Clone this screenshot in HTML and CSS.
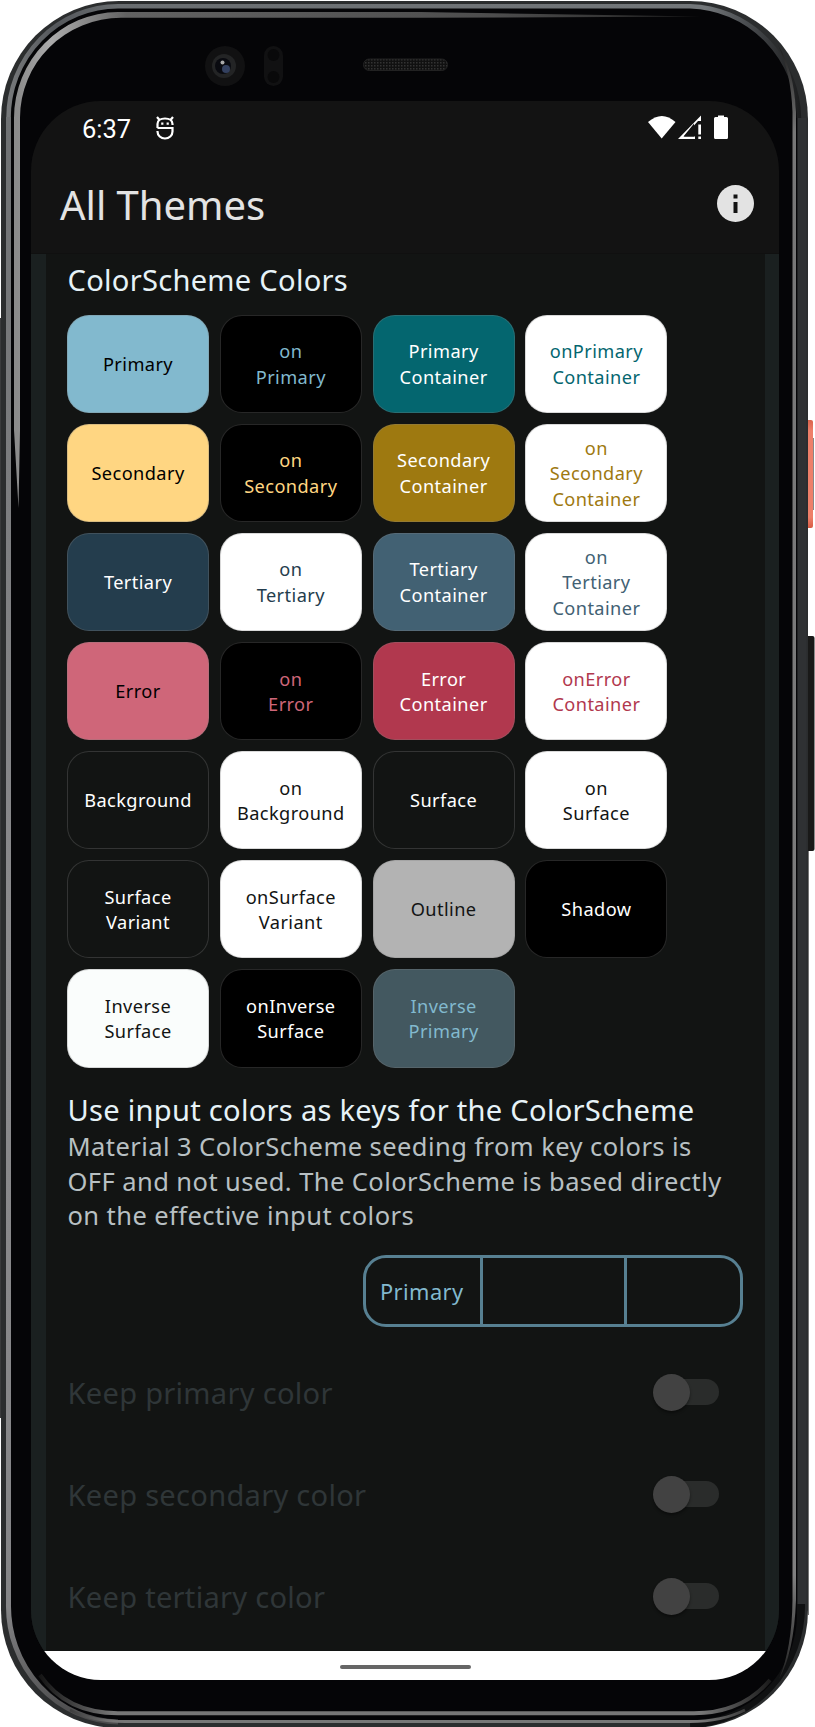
FILE: index.html
```
<!DOCTYPE html>
<html lang="en">
<head>
<meta charset="utf-8">
<title>All Themes</title>
<link rel="stylesheet" href="styles.css">
</head>
<body>
<div class="phone">
  <svg class="frame" viewBox="0 0 815 1727" aria-hidden="true">
    <defs>
      <linearGradient id="rimTop" gradientUnits="userSpaceOnUse" x1="8" y1="0" x2="800" y2="0">
        <stop offset="0" stop-color="#77797b"/><stop offset=".06" stop-color="#55585c"/><stop offset=".14" stop-color="#696d70"/><stop offset=".88" stop-color="#73777a"/><stop offset=".93" stop-color="#4c4f52"/><stop offset="1" stop-color="#1c1d1e"/>
      </linearGradient>
      <linearGradient id="rimLeft" gradientUnits="userSpaceOnUse" x1="0" y1="118" x2="0" y2="1720">
        <stop offset="0" stop-color="#6f7173"/><stop offset=".5" stop-color="#8b8b8d"/><stop offset=".93" stop-color="#858587"/><stop offset="1" stop-color="#4a4a4b"/>
      </linearGradient>
      <linearGradient id="shineTop" gradientUnits="userSpaceOnUse" x1="17" y1="0" x2="700" y2="0">
        <stop offset="0" stop-color="#8b8b8b"/><stop offset=".05" stop-color="#ababab"/><stop offset=".16" stop-color="#626262"/><stop offset=".7" stop-color="#4d4d4d"/><stop offset="1" stop-color="#222"/>
      </linearGradient>
      <linearGradient id="shineRight" gradientUnits="userSpaceOnUse" x1="0" y1="50" x2="0" y2="1690">
        <stop offset="0" stop-color="#222"/><stop offset=".05" stop-color="#777"/><stop offset=".93" stop-color="#808080"/><stop offset="1" stop-color="#151515"/>
      </linearGradient>
      <linearGradient id="shineBottom" gradientUnits="userSpaceOnUse" x1="40" y1="0" x2="775" y2="0">
        <stop offset="0" stop-color="#151515"/><stop offset=".1" stop-color="#777"/><stop offset=".9" stop-color="#777"/><stop offset="1" stop-color="#151515"/>
      </linearGradient>
      <linearGradient id="coral" x1="0" y1="0" x2="0" y2="1">
        <stop offset="0" stop-color="#d9634c"/><stop offset=".1" stop-color="#ee7f69"/><stop offset=".9" stop-color="#ee7f69"/><stop offset="1" stop-color="#d75b43"/>
      </linearGradient>
      <pattern id="mesh" width="3" height="3" patternUnits="userSpaceOnUse"><rect width="3" height="3" fill="#111"/><rect width="1.5" height="1.5" fill="#333"/></pattern>
    </defs>
    <rect x="803" y="420" width="10" height="108" rx="2" fill="url(#coral)"/>
    <path d="M813.500 438v72" stroke="#888"/>
    <rect x="803" y="636" width="11.500" height="215" rx="2" fill="#191918"/>
    <path d="M0 318v1100" stroke="#3a3b3c" stroke-width="3"/>
    <rect x="1" y="1" width="807" height="1727" rx="118" fill="#2b2d2e"/>
    <path d="M808.500 851V1615" stroke="#777"/>
    <path d="M799 118V1604A112 116 0 0 1 690 1722" fill="none" stroke="#101112" stroke-width="12"/>
    <path d="M802 118V1604" stroke="#2f3133" stroke-width="9"/>
    <rect x="11" y="8" width="786" height="1712" rx="106" fill="#050507"/>
    <g fill="none">
      <path d="M8.500 118A110 112 0 0 1 118 6.200H690A112 114 0 0 1 799 118" stroke="url(#rimTop)" stroke-width="4.500"/>
      <path d="M8.500 117V1604A112 116 0 0 0 118 1722" stroke="url(#rimLeft)" stroke-width="5"/>
      <path d="M70 1710Q92 1721.500 125 1721.500H690Q722 1721.500 745 1710" stroke="url(#shineBottom)" stroke-width="3"/>
      <path d="M40 1675Q66 1713.200 118 1713.200H694Q742 1713.200 770 1680" stroke="url(#shineBottom)" stroke-width="4"/>
    </g>
    <path d="M14 118A105 106 0 0 1 118 12H420L700 16.500L420 17.800H121A101 100 0 0 0 20 118V430L18.500 508L14 430z" fill="url(#shineTop)"/>
    <path d="M778 45Q794 70 796 112V1600Q794 1653 779 1679Q792 1648 792.500 1600V112Q791 73 778 45z" fill="url(#shineRight)"/>
  </svg>
  <svg class="sensors" viewBox="0 0 260 50" aria-hidden="true">
    <circle cx="25" cy="25" r="20" fill="#111112"/><circle cx="24" cy="25" r="12" fill="#232425"/><circle cx="23" cy="25" r="8" fill="#090a10"/><circle cx="26" cy="28" r="4" fill="#33405f"/><circle cx="22.500" cy="21.500" r="2" fill="#aaa"/>
    <rect x="64" y="5" width="19" height="40" rx="9.500" fill="#111112"/><circle cx="73.500" cy="14" r="6" fill="#09090a"/><circle cx="73.500" cy="36" r="6" fill="#09090a"/>
    <rect x="163.500" y="18" width="84" height="11.500" rx="5.700" fill="url(#mesh)" stroke="#222"/>
  </svg>
  <div class="corners">
  <div class="screen">
    <header class="status">
      <span class="clock">6:37</span>
      <svg class="notif" viewBox="0 0 18 24" fill="none" stroke="#fff" stroke-width="2.200"><path d="M1.500 12V8C1.500 4.500 4.500 2.500 9 2.500S16.500 4.500 16.500 8v1"/><path d="M1.500 12h15v3.500a7.500 7 0 0 1-15 0V15"/><path d="M1 1l2.500 3M17 1l-2.500 3"/><path d="M6.300 6.500v2.200M11.700 6.500v2.200"/></svg>
      <svg class="signals" viewBox="0 0 82 26" fill="#fff"><path d="M0 7Q14-5 27.500 7L13.700 23.500z"/><path d="M30 24L53 .5V6h-3L36 21.500h11V24z"/><path d="M46 8.500v13H35.500z" fill="#131313"/><path d="M50.300 9.500H53v10h-2.700zM50.300 21.500H53V24h-2.700z"/><path d="M70 .5h6V2h2.500Q80 2 80 3.500V22.500Q80 24 78.500 24H67.500Q66 24 66 22.500V3.500Q66 2 67.500 2H70z"/></svg>
    </header>
    <div class="appbar">
      <h1>All Themes</h1>
      <svg class="info" viewBox="0 0 37 37"><circle cx="18.500" cy="18.500" r="18.500" fill="#e3e3e3"/><path d="M16.500 9.500h4v4h-4zM16.500 17h4v11h-4z" fill="#131313"/></svg>
    </div>
    <main class="content">
      <section class="panel">
        <h2 class="heading">ColorScheme Colors</h2>
        <div class="swatches">
          <div class="swatch primary">Primary</div><div class="swatch on-primary">on<br>Primary</div><div class="swatch primary-c">Primary<br>Container</div><div class="swatch on-primary-c">onPrimary<br>Container</div>
          <div class="swatch secondary">Secondary</div><div class="swatch on-secondary">on<br>Secondary</div><div class="swatch secondary-c">Secondary<br>Container</div><div class="swatch on-secondary-c">on<br>Secondary<br>Container</div>
          <div class="swatch tertiary">Tertiary</div><div class="swatch on-tertiary">on<br>Tertiary</div><div class="swatch tertiary-c">Tertiary<br>Container</div><div class="swatch on-tertiary-c">on<br>Tertiary<br>Container</div>
          <div class="swatch error">Error</div><div class="swatch on-error">on<br>Error</div><div class="swatch error-c">Error<br>Container</div><div class="swatch on-error-c">onError<br>Container</div>
          <div class="swatch surface">Background</div><div class="swatch on-surface">on<br>Background</div><div class="swatch surface">Surface</div><div class="swatch on-surface">on<br>Surface</div>
          <div class="swatch surface">Surface<br>Variant</div><div class="swatch on-surface">onSurface<br>Variant</div><div class="swatch outline">Outline</div><div class="swatch shadow">Shadow</div>
          <div class="swatch inverse">Inverse<br>Surface</div><div class="swatch shadow">onInverse<br>Surface</div><div class="swatch inverse-primary">Inverse<br>Primary</div>
        </div>
        <h2 class="heading keys">Use input colors as keys for the ColorScheme</h2>
        <p class="desc">Material 3 ColorScheme seeding from key colors is<br>OFF and not used. The ColorScheme is based directly<br>on the effective input colors</p>
        <div class="toggles"><span class="seg first">Primary</span><span class="seg mid"></span><span class="seg last"></span></div>
        <div class="row"><span class="label">Keep primary color</span><span class="switch"></span></div>
        <div class="row"><span class="label">Keep secondary color</span><span class="switch"></span></div>
        <div class="row"><span class="label">Keep tertiary color</span><span class="switch"></span></div>
      </section>
    </main>
    <footer class="nav"><span class="pill"></span></footer>
  </div>
  </div>
</div>
</body>
</html>
```
FILE: styles.css
```
* { box-sizing: border-box; }
body { margin: 0; background: #fff; font-family: "Noto Sans", sans-serif; }
.phone { position: relative; width: 815px; height: 1727px; overflow: hidden; padding: 101px 36px 47px 31px; }
.frame { position: absolute; left: 0; top: 0; width: 815px; height: 1727px; }
.sensors { position: absolute; left: 200px; top: 41px; width: 260px; height: 50px; }
.corners { position: relative; width: 748px; height: 1579px; }
.screen { width: 748px; height: 1579px; border-radius: 70px; overflow: hidden; background: #131313; display: flex; flex-direction: column; }
.status { height: 54px; display: flex; align-items: center; padding: 0 49px 0 51px; flex: none; }
.clock { font: 25.5px/30px Roboto, sans-serif; color: #fff; width: 74px; padding-top: 1px; }
.notif { width: 18px; height: 24px; }
.signals { width: 82px; height: 26px; margin-left: auto; }
.appbar { height: 98px; display: flex; justify-content: space-between; align-items: center; padding: 0 25px 1px 29px; flex: none; }
h1 { margin: 2px 0 0; font-size: 40px; font-weight: 400; line-height: 50px; color: #e3e3e3; }
.info { width: 37px; height: 37px; margin-top: -1px; }
.content { flex: 1; min-height: 0; background: #1a2020; padding: 0 14.500px; border-top: 1px solid #101010; }
.panel { height: 100%; background: #121413; padding: 7px 0 0 22px; overflow: hidden; }
.heading { margin: 0; font-size: 29.100px; font-weight: 400; line-height: 38px; letter-spacing: .27px; color: #e6f2f7; white-space: nowrap; }
.swatches { display: grid; grid-template-columns: repeat(4, 142px); grid-auto-rows: 98.500px; gap: 10.600px 10.800px; margin: 15.500px 0 0 -.5px; }
.swatch { display: flex; flex-direction: column; align-items: center; justify-content: center; text-align: center; border-radius: 22px; border: 1.500px solid rgba(128,128,128,.3); padding-top: 2px; font-size: 18.200px; line-height: 25.500px; letter-spacing: .42px; }
.primary { background: #82b9ce; color: #000; }
.on-primary { background: #000; color: #82b9ce; }
.primary-c { background: #04666f; color: #fff; }
.on-primary-c { background: #fff; color: #04666f; }
.secondary { background: #ffd682; color: #000; }
.on-secondary { background: #000; color: #ffd682; }
.secondary-c { background: #9e7910; color: #fff; }
.on-secondary-c { background: #fff; color: #9e7910; }
.tertiary { background: #243d4d; color: #fff; }
.on-tertiary { background: #fff; color: #243d4d; }
.tertiary-c { background: #426173; color: #fff; }
.on-tertiary-c { background: #fff; color: #426173; }
.error { background: #cf6679; color: #000; }
.on-error { background: #000; color: #cf6679; }
.error-c { background: #b1384e; color: #fff; }
.on-error-c { background: #fff; color: #b1384e; }
.surface { background: #121413; color: #fff; }
.on-surface { background: #fff; color: #121413; }
.outline { background: #b3b3b3; color: #121413; }
.shadow { background: #000; color: #fff; }
.inverse { background: #fafdfc; color: #121413; }
.inverse-primary { background: #435860; color: #82b9ce; }
.keys { margin-top: 23px; }
.desc { margin: .5px 0 0; font-size: 25.500px; line-height: 34.500px; letter-spacing: .43px; color: #b8c0c3; white-space: nowrap; }
.toggles { display: flex; width: 380px; height: 72.500px; margin: 22px 0 0 295px; border: 3px solid #578092; border-radius: 23px; }
.seg { border-right: 3px solid #578092; }
.first { width: 117.500px; font-size: 21.800px; letter-spacing: .45px; line-height: 68px; text-align: center; color: #82b9ce; padding-right: 2px; }
.mid { width: 144px; }
.last { flex: 1; border: 0; }
.row { display: flex; justify-content: space-between; align-items: center; height: 101.600px; padding-right: 46px; }
.toggles + .row { margin-top: 15.500px; }
.label { font-size: 29.100px; letter-spacing: .27px; color: #2f3638; }
.switch { position: relative; width: 66px; height: 26px; margin-top: -2px; background: linear-gradient(#2a2c2b, #2a2c2b) right / 50px 26px no-repeat; border-radius: 13px; }
.switch::before { content: ""; position: absolute; left: 0; top: -5px; width: 37px; height: 37px; border-radius: 50%; background: #424242; box-shadow: 0 2px 3px rgba(0,0,0,.4); }
.nav { height: 29px; background: #fff; flex: none; display: flex; justify-content: center; align-items: center; padding-top: 3px; }
.pill { width: 131px; height: 4px; border-radius: 2px; background: #666; }
```
